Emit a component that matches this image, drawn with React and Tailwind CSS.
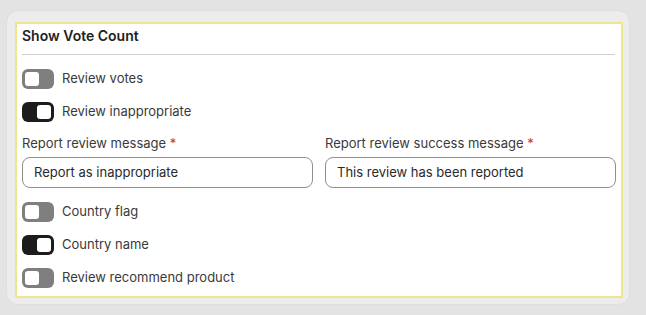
const toggles1 = [
  { label: 'Review votes', on: false },
  { label: 'Review inappropriate', on: true },
]

const toggles2 = [
  { label: 'Country flag', on: false },
  { label: 'Country name', on: true },
  { label: 'Review recommend product', on: false },
]

function Toggle({ on, label }) {
  return (
    <div className="flex items-center gap-2 h-5">
      <span
        className={
          on
            ? 'w-8 h-5 rounded-md bg-[#1c1c1c] flex items-center justify-end px-[3px]'
            : 'w-8 h-5 rounded-md bg-[#7f7f7f] flex items-center justify-start px-[3px]'
        }
      >
        <span className="w-3.5 h-3.5 rounded-[3px] bg-white" />
      </span>
      <span className="text-[13px] text-[#3a3a3a]">{label}</span>
    </div>
  )
}

function Field({ label, value }) {
  return (
    <div className="flex-1 flex flex-col">
      <label className="text-[13px] leading-[18px] text-[#3a3a3a]">
        {label} <span className="text-[#c0392b]">*</span>
      </label>
      <div className="mt-[5px] h-[31px] rounded-lg border border-[#8f8f8f] bg-white flex items-center pl-[11px] pr-3 text-[13px] text-[#2a2a2a]">
        {value}
      </div>
    </div>
  )
}

export default function App() {
  return (
    <div className="w-[646px] h-[315px] bg-[#e3e3e3] pt-[10px] pl-[6px] font-['Inter',sans-serif]">
      <div className="w-[624px] h-[295px] rounded-xl bg-[#ececec] border border-[#dedede] pt-[11px] pl-[8px] pr-[6px] pb-[6px]">
        <div className="h-full border-2 border-[#ece68e] bg-white px-[5px] pt-[2px]">
          <div className="h-5 flex items-center text-sm font-semibold text-[#222]">Show Vote Count</div>
          <div className="mt-[8px] h-px bg-[#cfcfcf] mr-[1px]" />
          <div className="mt-[14px] flex flex-col gap-[13px]">
            {toggles1.map((t) => (
              <Toggle key={t.label} {...t} />
            ))}
          </div>
          <div className="mt-[12px] flex gap-3">
            <Field label="Report review message" value="Report as inappropriate" />
            <Field label="Report review success message" value="This review has been reported" />
          </div>
          <div className="mt-[14px] flex flex-col gap-[13px]">
            {toggles2.map((t) => (
              <Toggle key={t.label} {...t} />
            ))}
          </div>
        </div>
      </div>
    </div>
  )
}
